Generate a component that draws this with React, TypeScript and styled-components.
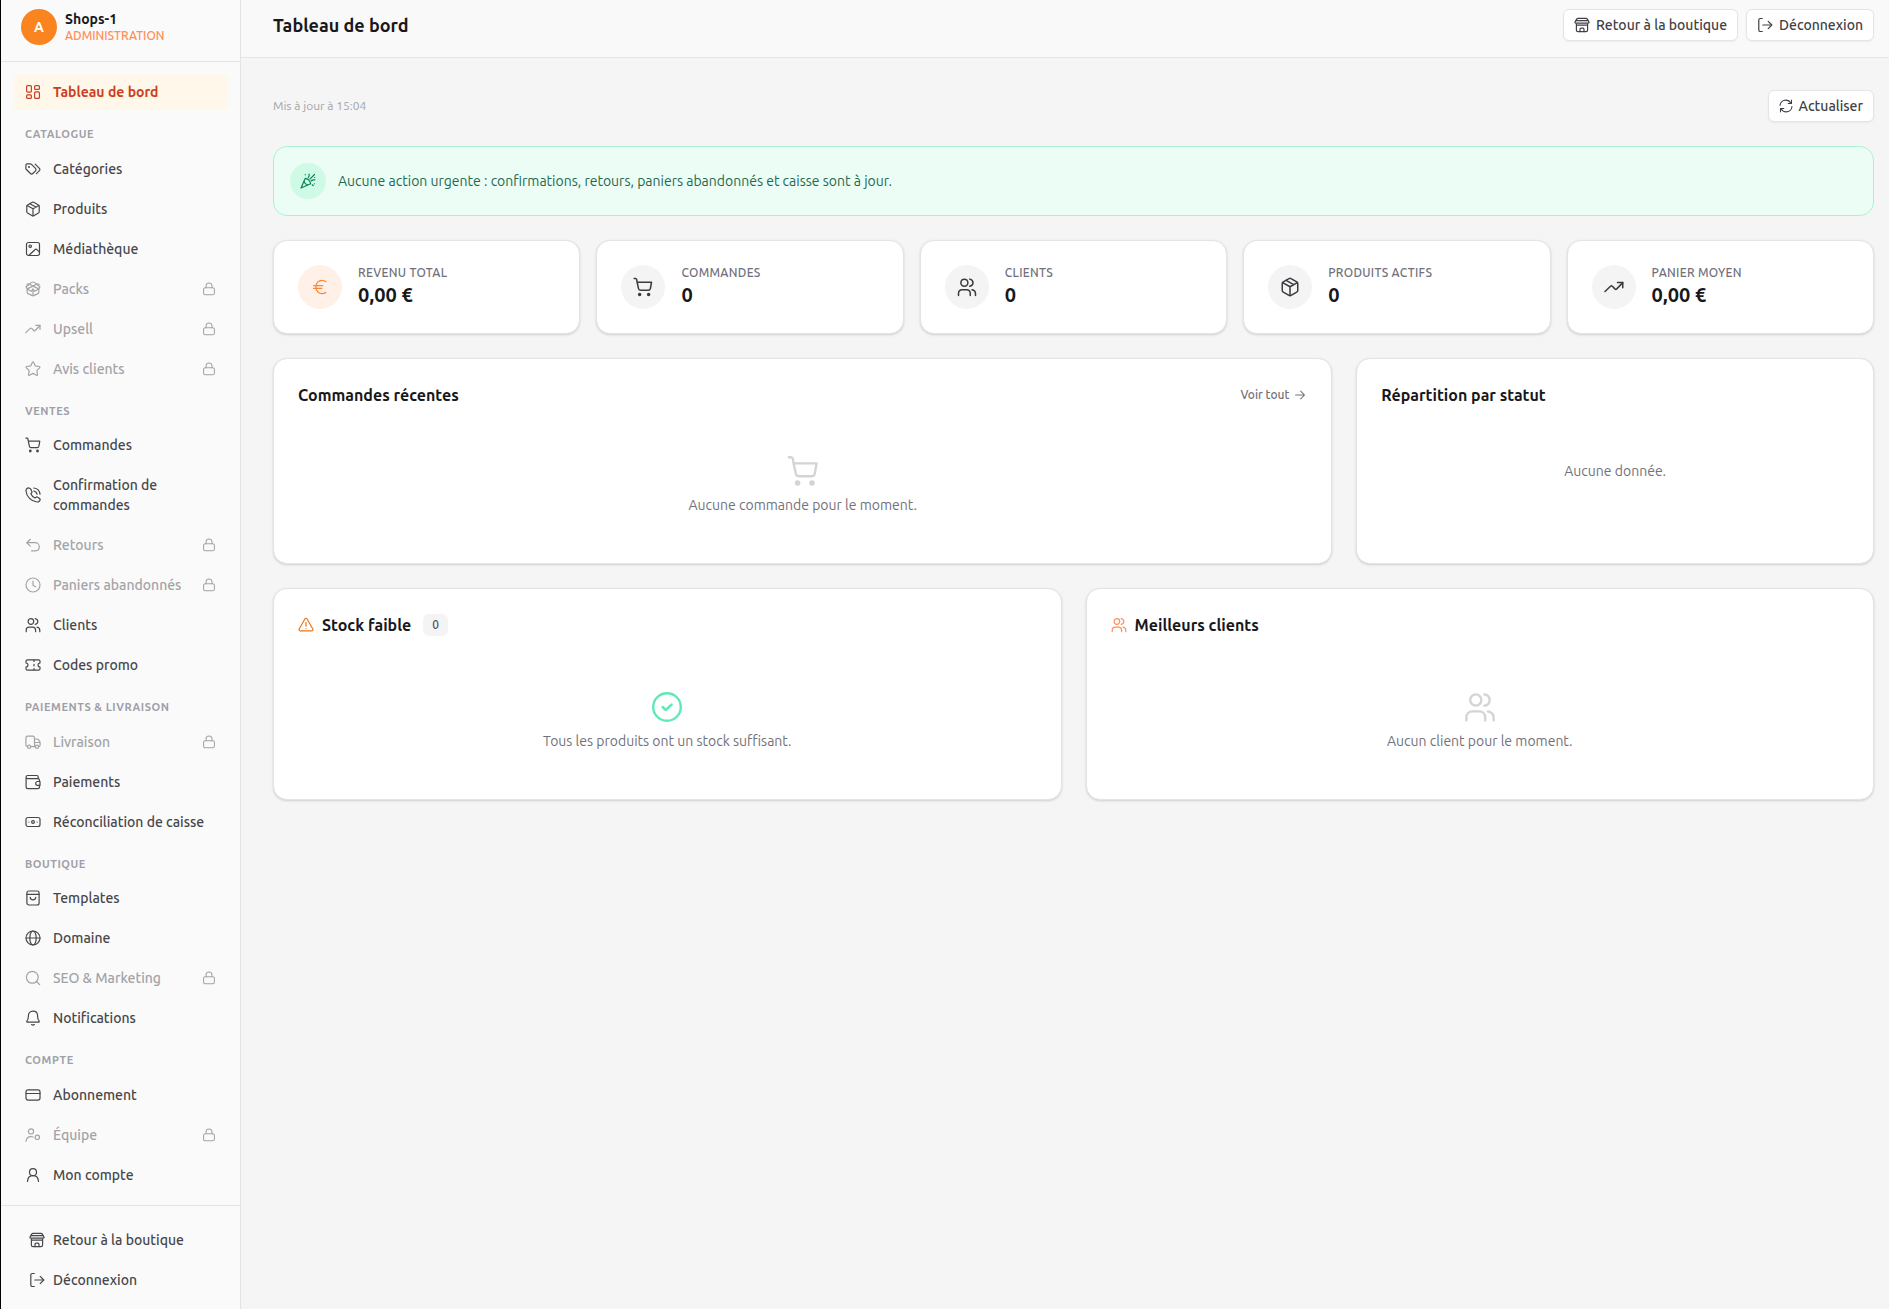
import React from "react";
import styled, { createGlobalStyle } from "styled-components";

const GlobalStyle = createGlobalStyle`
  *, *::before, *::after { box-sizing: border-box; }
  body {
    margin: 0;
    background: #f5f5f5;
    color: #18181b;
    font-family: Ubuntu, "Open Sans", "Noto Sans", sans-serif;
    font-size: 14px;
    line-height: 20px;
  }
  h1, h2, p, ul, dl, dd { margin: 0; padding: 0; }
  ul { list-style: none; }
  a { color: inherit; text-decoration: none; }
  button { font: inherit; cursor: pointer; }
`;

/* ---------- Icons, drawn on a 16-unit grid ---------- */

const shapes = {
  dashboard: (
    <>
      <rect x="1.6" y="1.6" width="4.8" height="6.5" rx="1" />
      <rect x="9.6" y="1.6" width="4.8" height="3.8" rx="1" />
      <rect x="1.6" y="10.9" width="4.8" height="3.5" rx="1" />
      <rect x="9.6" y="7.9" width="4.8" height="6.5" rx="1" />
    </>
  ),
  tags: (
    <>
      <path d="M.9 4.2v3.1c0 .5.2.9.5 1.2l4 4c.7.7 1.7.7 2.4 0l2.7-2.7c.7-.7.7-1.7 0-2.4l-4-4C6.2 3.1 5.8 2.9 5.3 2.9H2.2c-.7 0-1.3.6-1.3 1.300Z" />
      <path d="m10.200 3.100 4.200 4.200c.6.7.6 1.600 0 2.300l-3 3" />
      <circle cx="4" cy="6" r=".400" fill="currentColor" />
    </>
  ),
  package: (
    <>
      <path d="M7.200 1.300 2.600 3.900c-.5.300-.8.700-.8 1.300v5.600c0 .600.300 1 .800 1.300l4.600 2.600c.5.300 1.100.300 1.600 0l4.600-2.600c.5-.300.800-.700.800-1.300V5.200c0-.600-.300-1-.800-1.300L8.800 1.300c-.5-.300-1.100-.300-1.600 0Z" />
      <path d="M2.100 4.500 8 7.800l5.900-3.300M8 7.800v6.900M4.900 2.700l6 3.400" />
    </>
  ),
  image: (
    <>
      <rect x="1.500" y="1.500" width="13" height="13" rx="2" />
      <circle cx="5.200" cy="5.200" r="1.200" />
      <path d="m4 14.300 5.900-5.600c.6-.6 1.500-.6 2.100 0l2.400 2.500" />
    </>
  ),
  packs: (
    <>
      <path d="M2.200 7.800v3.600c0 .600.300 1 .800 1.200l4.300 2c.5.200.9.200 1.400 0l4.300-2c.5-.200.800-.600.800-1.200V7.800" />
      <path d="M8 8.200v6.500M8 5.100 2.300 7.900 1 5.800l3.800-2.600L8 5.100l3.200-1.900L15 5.800l-1.300 2.100L8 5.100Z" />
      <path d="M8 8.200 6.300 10.300 2.300 7.900M8 8.200l1.700 2.100 4-2.400M4.800 3.200c-1.300-.8-2.400-.4-2.900.5M11.200 3.200c1.300-.8 2.400-.4 2.900.5M4.800 3.200C5.500 1.500 6.800 1 8 1s2.500.5 3.200 2.200" />
    </>
  ),
  trend: (
    <>
      <path d="m.8 11.600 4.400-4.200c.5-.4 1-.4 1.500 0l2 2.100c.5.500 1 .5 1.500 0L15 4.500" />
      <path d="M10.800 4.300H15v4.200" />
    </>
  ),
  star: (
    <path d="m8.600 1.300 1.700 3.600 3.900.6c.7.1.9.8.4 1.300l-2.800 2.800.7 3.900c.1.600-.5 1-1 .7L8 12.400l-3.500 1.800c-.5.300-1.100-.1-1-.700l.7-3.900-2.800-2.800c-.5-.5-.3-1.200.4-1.300l3.900-.6 1.700-3.600c.2-.5.900-.5 1.200 0Z" />
  ),
  cart: (
    <>
      <path d="M.9 1.100H2c.5 0 .8.300.9.800l.4 2.300h11.500l-.9 5c-.2.900-.8 1.400-1.600 1.400H6c-.9 0-1.500-.6-1.600-1.400L3.300 4.200" />
      <circle cx="5.300" cy="14" r=".800" fill="currentColor" />
      <circle cx="12.500" cy="14" r=".800" fill="currentColor" />
    </>
  ),
  phone: (
    <>
      <path d="M5.900 2.200 4.600 1.300C3.800.7 2.700.8 2 1.500c-.7.700-1.100 1.500-1 2.500.5 5.700 5.200 10.400 11 11 1 .100 1.800-.3 2.500-1 .700-.7.700-1.800 0-2.500l-1.700-1.300c-.6-.5-1.500-.4-2 .1l-.7.7c-2-.9-3.400-2.300-4.300-4.300l.7-.7c.500-.5.600-1.300.1-2Z" />
      <path d="M8.800 1c3.400.4 5.800 2.800 6.200 6.200M8.800 4c1.700.3 2.900 1.500 3.200 3.200" />
    </>
  ),
  undo: (
    <>
      <path d="M5.300 2.300 1.800 5.700l3.500 3.400" />
      <path d="M2 5.700h8.400c2.100 0 3.800 1.700 3.800 3.800v.5c0 2.200-1.700 3.800-3.800 3.800H6.500" />
    </>
  ),
  clock: (
    <>
      <circle cx="8" cy="8" r="7" />
      <path d="M8 4v4.200l2.600 1.500" />
    </>
  ),
  users: (
    <>
      <circle cx="5.900" cy="4.500" r="2.800" />
      <path d="M1.200 14.700v-1.500c0-1.800 1.200-3 3-3h3.400c1.800 0 3 1.200 3 3v1.500M10.200 1.700c1.600.3 2.600 1.400 2.600 2.900s-1 2.500-2.600 2.800M12 10.200c1.700.3 2.800 1.500 2.800 3.200v1.300" />
    </>
  ),
  ticket: (
    <>
      <path d="M1 4.300c0-.900.600-1.500 1.500-1.500h11c.900 0 1.500.600 1.500 1.500v1.500c-1.200.200-2 1-2 2.200s.8 2 2 2.200v1.500c0 .900-.600 1.500-1.500 1.500h-11c-.900 0-1.500-.600-1.500-1.500v-1.500c1.200-.200 2-1 2-2.200s-.8-2-2-2.200Z" />
      <path d="M9 3v1.500M9 7.300v1.500M9 11.500V13" />
    </>
  ),
  truck: (
    <>
      <path d="M2.300 12.600c-.8-.1-1.400-.7-1.400-1.600V3.900C.9 2.800 1.600 2.100 2.700 2.100h5c1.100 0 1.800.7 1.800 1.800v8.700H5.800M9.500 5h2.400c.6 0 1 .200 1.400.6l1.200 1.500c.400.5.600.9.600 1.500V11c0 1-.5 1.600-1.400 1.700M9.500 8.500h5.400" />
      <circle cx="4.100" cy="12.700" r="1.600" />
      <circle cx="12" cy="12.700" r="1.600" />
    </>
  ),
  wallet: (
    <>
      <path d="M13.200 4.700V3c0-.9-.6-1.500-1.500-1.500H2.600C1.700 1.500 1.100 2 1.100 2.900v9.900c0 1.100.8 1.900 1.900 1.900h9.600c1.100 0 1.900-.8 1.900-1.900v-1.400M1.100 3.100c0 1 .6 1.600 1.600 1.600h10c1.100 0 1.800.7 1.800 1.800v1" />
      <path d="M12.600 7.500H15v3.900h-2.400c-1.100 0-1.900-.8-1.900-1.900s.8-2 1.900-2Z" />
    </>
  ),
  cash: (
    <>
      <rect x="1" y="3.500" width="14" height="9" rx="2" />
      <circle cx="8" cy="8" r="1.400" />
      <path d="M3.800 8h.1M12.100 8h.1" />
    </>
  ),
  bag: (
    <>
      <rect x="1.900" y="1" width="12.200" height="14" rx="2" />
      <path d="M2 4.300h12M5.200 7.300c.2 1.500 1.300 2.500 2.800 2.500s2.600-1 2.800-2.500" />
    </>
  ),
  globe: (
    <>
      <circle cx="8" cy="8" r="7" />
      <ellipse cx="8" cy="8" rx="3.200" ry="7" />
      <path d="M1 8h14" />
    </>
  ),
  search: (
    <>
      <circle cx="7.300" cy="7.300" r="5.900" />
      <path d="m11.500 11.500 3.200 3.200" />
    </>
  ),
  bell: (
    <>
      <path d="M8 1.100c-2.800 0-4.600 2-4.600 4.700 0 2.400-.4 4-1.400 5-.5.600-.2 1.400.6 1.400h10.800c.8 0 1.100-.8.600-1.400-1-1-1.400-2.600-1.400-5 0-2.700-1.800-4.700-4.600-4.700Z" />
      <path d="M6.600 14.600c.8.500 2 .5 2.800 0" />
    </>
  ),
  card: (
    <>
      <rect x="1" y="2.900" width="14" height="10.200" rx="2" />
      <path d="M1 6.500h14" />
    </>
  ),
  userCog: (
    <>
      <circle cx="6" cy="4.400" r="2.600" />
      <path d="M1 14.300c.3-2.900 2.300-4.700 5-4.700.8 0 1.400.1 2 .4" />
      <circle cx="12.300" cy="10.300" r="2.200" />
    </>
  ),
  user: (
    <>
      <circle cx="8" cy="5.200" r="3.500" />
      <path d="M2.500 14.500c.2-3.400 2.400-5.800 5.500-5.800s5.300 2.400 5.500 5.800" />
    </>
  ),
  store: (
    <>
      <path d="M4 1.400h8c.6 0 1 .2 1.300.7l1.600 2.800c.3.600.1 1.200-.6 1.200H1.700c-.7 0-.9-.6-.6-1.200l1.600-2.800c.3-.5.7-.7 1.300-.7Z" />
      <path d="M2.300 3.600h11.400M2.400 7v6.100c0 1 .6 1.600 1.600 1.600h8c1 0 1.600-.6 1.600-1.600V7M2.400 8.200h11.200" />
      <path d="M6 14.600v-2.200c0-.8.4-1.200 1.200-1.200h1.600c.8 0 1.200.4 1.200 1.200v2.200" />
    </>
  ),
  logout: (
    <>
      <path d="M5.300 1.500H3.400c-1 0-1.600.6-1.600 1.600v9.800c0 1 .6 1.600 1.600 1.600h1.900M5.800 8H14.500" />
      <path d="M11.200 4.400 14.800 8l-3.600 3.600" />
    </>
  ),
  lock: (
    <>
      <rect x="1.800" y="6.600" width="12.400" height="8" rx="2" />
      <path d="M4.600 6.600V4.500C4.600 2.500 6 1.100 8 1.100s3.400 1.400 3.400 3.400v2.100" />
    </>
  ),
  refresh: (
    <path d="M1.200 7.300C1.500 3.800 4.300 1.300 7.800 1.300c2.600 0 4.700 1.300 5.900 3.500M14.300 1.300v3.800h-3.800M14.800 8.700c-.3 3.500-3.100 6-6.600 6-2.600 0-4.700-1.300-5.900-3.500M1.700 14.700v-3.800h3.800" />
  ),
  party: (
    <>
      <path d="M5.200 5.400 1 15l9.600-4.200C10.400 8.200 7.800 5.600 5.200 5.400Z" />
      <path d="M4 8.500c.6 1.600 1.900 2.900 3.500 3.500M8.200 4.700c.9-.8 1.200-2 .9-3.500M11.300 7.800c1-.9 2.200-1.200 3.500-.9M9.900 6.100l4.600-4.600M5.200 1.700h.1M14.500 4.500h.1M14.300 10.800h.1M12.200 11.700l1 .9" />
    </>
  ),
  euro: (
    <path d="M13.900 2.700C12.900 1.800 11.500 1.300 10 1.300 6.400 1.300 4 4.200 4 8s2.400 6.700 6 6.700c1.500 0 2.900-.5 3.900-1.400M1.600 6.600h9.200M1.600 9.400h8.200" />
  ),
  arrow: (
    <path d="M3 8h10M8.800 3.600 13.200 8l-4.400 4.400" />
  ),
  check: (
    <>
      <circle cx="8" cy="8" r="6.900" />
      <path d="m5.800 8 1.600 1.500 2.900-2.700" />
    </>
  ),
  warning: (
    <>
      <path d="M6.900 2 1.200 12c-.5.900.1 1.900 1.100 1.900h11.400c1 0 1.600-1 1.100-1.900L9.100 2c-.5-.9-1.700-.9-2.200 0Z" />
      <path d="M8 5.600v3.600M8 11.500v.1" />
    </>
  ),
};

type IconName = keyof typeof shapes;

const Glyph = styled.svg<{ $size: number }>`
  width: ${(p) => p.$size}px;
  height: ${(p) => p.$size}px;
  flex: none;
  display: block;
  fill: none;
  stroke: currentColor;
  stroke-width: 1.2;
  stroke-linecap: round;
  stroke-linejoin: round;
`;

function Icon({ name, size = 16 }: { name: IconName; size?: number }) {
  return (
    <Glyph $size={size} viewBox="0 0 16 16" aria-hidden="true">
      {shapes[name]}
    </Glyph>
  );
}

/* ---------- Shell ---------- */

const Shell = styled.div`
  display: flex;
  min-height: 100vh;
  border-left: 1px solid #000;
`;

const Sidebar = styled.aside`
  display: flex;
  flex-direction: column;
  flex: none;
  width: 240px;
  background: #fafafa;
  border-right: 1px solid #e4e4e7;
`;

const Brand = styled.div`
  display: flex;
  align-items: center;
  gap: 8px;
  padding: 9px 20px 16px;
  border-bottom: 1px solid #e4e4e7;
`;

const Avatar = styled.span`
  display: grid;
  place-items: center;
  width: 36px;
  height: 36px;
  border-radius: 50%;
  background: #f98420;
  color: #fff;
  font-weight: 700;
`;

const BrandName = styled.p`
  font-weight: 600;
  line-height: 18px;
`;

const BrandRole = styled.p`
  color: #ff8f57;
  font-size: 12px;
  font-weight: 500;
  line-height: 16px;
`;

const Nav = styled.nav`
  flex: 1;
  padding: 12px;
`;

const NavList = styled.ul`
  display: flex;
  flex-direction: column;
  gap: 4px;
`;

const NavHeading = styled.h2`
  padding: 16px 12px 8px;
  color: #9f9fa9;
  font-size: 11px;
  font-weight: 600;
  line-height: 1.5;
  letter-spacing: 0.05em;
  text-transform: uppercase;
`;

const NavLink = styled.a<{ $active?: boolean; $locked?: boolean; $tight?: boolean }>`
  display: flex;
  align-items: center;
  gap: ${(p) => (p.$tight ? 8 : 12)}px;
  padding: 8px 12px;
  border-radius: 6px;
  background: ${(p) => (p.$active ? "#fff7ea" : "transparent")};
  color: ${(p) => (p.$active ? "#cb3f22" : p.$locked ? "#a3a3a8" : "#46464b")};
  font-weight: ${(p) => (p.$active ? 600 : 500)};

  span { flex: 1; }
`;

const SidebarFooter = styled.div`
  padding: 16px 12px 12px 16px;
  border-top: 1px solid #e4e4e7;
`;

const Main = styled.div`
  display: flex;
  flex-direction: column;
  flex: 1;
  min-width: 0;
`;

const TopBar = styled.header`
  display: flex;
  align-items: center;
  justify-content: space-between;
  padding: 9px 15px 16px 32px;
  background: #f9f9f9;
  border-bottom: 1px solid #e4e4e7;
`;

const PageTitle = styled.h1`
  font-size: 18px;
  font-weight: 600;
  line-height: 28px;
`;

const Actions = styled.div`
  display: flex;
  gap: 8px;
`;

const Button = styled.button`
  display: flex;
  align-items: center;
  gap: 6px;
  height: 32px;
  padding: 0 10px;
  border: 1px solid #e4e4e7;
  border-radius: 6px;
  background: #fff;
  box-shadow: 0 1px 2px rgba(0, 0, 0, 0.05);
  color: #3f3f46;
  font-size: 14px;
  font-weight: 500;
`;

/* ---------- Dashboard ---------- */

const Content = styled.main`
  display: flex;
  flex-direction: column;
  gap: 24px;
  padding: 32px 15px 32px 32px;
`;

const Toolbar = styled.div`
  display: flex;
  align-items: center;
  justify-content: space-between;
`;

const Updated = styled.p`
  color: #a3a3a8;
  font-size: 12px;
`;

const Notice = styled.div`
  display: flex;
  align-items: center;
  gap: 12px;
  padding: 16px;
  border: 1px solid #a9f3d3;
  border-radius: 14px;
  background: #ebfdf5;
  color: #1d6a50;
`;

const Round = styled.span<{ $size: number; $bg: string; $color: string }>`
  display: grid;
  place-items: center;
  flex: none;
  width: ${(p) => p.$size}px;
  height: ${(p) => p.$size}px;
  border-radius: 50%;
  background: ${(p) => p.$bg};
  color: ${(p) => p.$color};
`;

const Card = styled.section`
  padding: 24px;
  border: 1px solid #e4e4e7;
  border-radius: 14px;
  background: #fff;
  box-shadow: 0 1px 3px rgba(0, 0, 0, 0.1), 0 1px 2px rgba(0, 0, 0, 0.06);
`;

const Metrics = styled.div`
  display: grid;
  grid-template-columns: repeat(5, minmax(0, 1fr));
  gap: 16px;
`;

const Metric = styled(Card)`
  display: flex;
  align-items: center;
  gap: 16px;
`;

const MetricLabel = styled.h2`
  color: #71717b;
  font-size: 12px;
  font-weight: 500;
  line-height: 16px;
  letter-spacing: 0.025em;
  text-transform: uppercase;
`;

const MetricValue = styled.p`
  font-size: 20px;
  font-weight: 600;
  line-height: 28px;
`;

const Row = styled.div<{ $columns: number }>`
  display: grid;
  grid-template-columns: repeat(${(p) => p.$columns}, minmax(0, 1fr));
  gap: 24px;
`;

const WideCard = styled(Card)`
  grid-column: span 2;
`;

const CardHeader = styled.div`
  display: flex;
  align-items: center;
  gap: 8px;
  height: 24px;
  margin-bottom: 16px;
`;

const CardTitle = styled.h2`
  font-size: 16px;
  font-weight: 600;
  line-height: 24px;
`;

const MoreLink = styled.a`
  display: flex;
  align-items: center;
  gap: 4px;
  margin-left: auto;
  color: #71717b;
  font-size: 12px;
  font-weight: 500;
`;

const Badge = styled.span`
  margin-left: 4px;
  padding: 0 9px;
  border-radius: 6px;
  background: #f4f4f5;
  color: #52525c;
  font-size: 12px;
  font-weight: 500;
  line-height: 22px;
`;

const Tint = styled.span<{ $color: string }>`
  color: ${(p) => p.$color};
`;

const Empty = styled.div<{ $top: number }>`
  display: flex;
  flex-direction: column;
  align-items: center;
  gap: 8px;
  padding: ${(p) => p.$top}px 0 24px;
  color: #71717b;
`;

type Item = { icon: IconName; label: string; active?: boolean; locked?: boolean };

const groups: { title?: string; items: Item[] }[] = [
  { items: [{ icon: "dashboard", label: "Tableau de bord", active: true }] },
  {
    title: "Catalogue",
    items: [
      { icon: "tags", label: "Catégories" },
      { icon: "package", label: "Produits" },
      { icon: "image", label: "Médiathèque" },
      { icon: "packs", label: "Packs", locked: true },
      { icon: "trend", label: "Upsell", locked: true },
      { icon: "star", label: "Avis clients", locked: true },
    ],
  },
  {
    title: "Ventes",
    items: [
      { icon: "cart", label: "Commandes" },
      { icon: "phone", label: "Confirmation de commandes" },
      { icon: "undo", label: "Retours", locked: true },
      { icon: "clock", label: "Paniers abandonnés", locked: true },
      { icon: "users", label: "Clients" },
      { icon: "ticket", label: "Codes promo" },
    ],
  },
  {
    title: "Paiements & livraison",
    items: [
      { icon: "truck", label: "Livraison", locked: true },
      { icon: "wallet", label: "Paiements" },
      { icon: "cash", label: "Réconciliation de caisse" },
    ],
  },
  {
    title: "Boutique",
    items: [
      { icon: "bag", label: "Templates" },
      { icon: "globe", label: "Domaine" },
      { icon: "search", label: "SEO & Marketing", locked: true },
      { icon: "bell", label: "Notifications" },
    ],
  },
  {
    title: "Compte",
    items: [
      { icon: "card", label: "Abonnement" },
      { icon: "userCog", label: "Équipe", locked: true },
      { icon: "user", label: "Mon compte" },
    ],
  },
];

const metrics: { icon: IconName; label: string; value: string; accent?: boolean }[] = [
  { icon: "euro", label: "Revenu total", value: "0,00 €", accent: true },
  { icon: "cart", label: "Commandes", value: "0" },
  { icon: "users", label: "Clients", value: "0" },
  { icon: "package", label: "Produits actifs", value: "0" },
  { icon: "trend", label: "Panier moyen", value: "0,00 €" },
];

export default function App() {
  return (
    <>
      <GlobalStyle />
      <Shell>
        <Sidebar>
          <Brand>
            <Avatar>A</Avatar>
            <div>
              <BrandName>Shops-1</BrandName>
              <BrandRole>ADMINISTRATION</BrandRole>
            </div>
          </Brand>
          <Nav>
            {groups.map((group) => (
              <div key={group.title ?? "home"}>
                {group.title && <NavHeading>{group.title}</NavHeading>}
                <NavList>
                  {group.items.map((item) => (
                    <li key={item.label}>
                      <NavLink href="#" $active={item.active} $locked={item.locked}>
                        <Icon name={item.icon} />
                        <span>{item.label}</span>
                        {item.locked && <Icon name="lock" size={14} />}
                      </NavLink>
                    </li>
                  ))}
                </NavList>
              </div>
            ))}
          </Nav>
          <SidebarFooter>
            <NavList>
              <li>
                <NavLink href="#" $tight>
                  <Icon name="store" />
                  <span>Retour à la boutique</span>
                </NavLink>
              </li>
              <li>
                <NavLink href="#" $tight>
                  <Icon name="logout" />
                  <span>Déconnexion</span>
                </NavLink>
              </li>
            </NavList>
          </SidebarFooter>
        </Sidebar>

        <Main>
          <TopBar>
            <PageTitle>Tableau de bord</PageTitle>
            <Actions>
              <Button type="button">
                <Icon name="store" />
                Retour à la boutique
              </Button>
              <Button type="button">
                <Icon name="logout" />
                Déconnexion
              </Button>
            </Actions>
          </TopBar>

          <Content>
            <Toolbar>
              <Updated>Mis à jour à 15:04</Updated>
              <Button type="button">
                <Icon name="refresh" size={14} />
                Actualiser
              </Button>
            </Toolbar>

            <Notice role="status">
              <Round $size={36} $bg="#cffae5" $color="#0b8058">
                <Icon name="party" />
              </Round>
              <p>Aucune action urgente : confirmations, retours, paniers abandonnés et caisse sont à jour.</p>
            </Notice>

            <Metrics>
              {metrics.map((m) => (
                <Metric key={m.label}>
                  <Round
                    $size={44}
                    $bg={m.accent ? "#fff0e8" : "#f4f4f5"}
                    $color={m.accent ? "#ff8534" : "#3a3a3f"}
                  >
                    <Icon name={m.icon} size={m.accent ? 16 : 20} />
                  </Round>
                  <div>
                    <MetricLabel>{m.label}</MetricLabel>
                    <MetricValue>{m.value}</MetricValue>
                  </div>
                </Metric>
              ))}
            </Metrics>

            <Row $columns={3}>
              <WideCard>
                <CardHeader>
                  <CardTitle>Commandes récentes</CardTitle>
                  <MoreLink href="#">
                    Voir tout
                    <Icon name="arrow" size={14} />
                  </MoreLink>
                </CardHeader>
                <Empty $top={32}>
                  <Tint $color="#d4d4d6">
                    <Icon name="cart" size={32} />
                  </Tint>
                  <p>Aucune commande pour le moment.</p>
                </Empty>
              </WideCard>
              <Card>
                <CardHeader>
                  <CardTitle>Répartition par statut</CardTitle>
                </CardHeader>
                <Empty $top={38}>
                  <p>Aucune donnée.</p>
                </Empty>
              </Card>
            </Row>

            <Row $columns={2}>
              <Card>
                <CardHeader>
                  <Tint $color="#e8771e">
                    <Icon name="warning" />
                  </Tint>
                  <CardTitle>Stock faible</CardTitle>
                  <Badge>0</Badge>
                </CardHeader>
                <Empty $top={38}>
                  <Tint $color="#5ee9b5">
                    <Icon name="check" size={32} />
                  </Tint>
                  <p>Tous les produits ont un stock suffisant.</p>
                </Empty>
              </Card>
              <Card>
                <CardHeader>
                  <Tint $color="#ff8f57">
                    <Icon name="users" />
                  </Tint>
                  <CardTitle>Meilleurs clients</CardTitle>
                </CardHeader>
                <Empty $top={38}>
                  <Tint $color="#d4d4d6">
                    <Icon name="users" size={32} />
                  </Tint>
                  <p>Aucun client pour le moment.</p>
                </Empty>
              </Card>
            </Row>
          </Content>
        </Main>
      </Shell>
    </>
  );
}
